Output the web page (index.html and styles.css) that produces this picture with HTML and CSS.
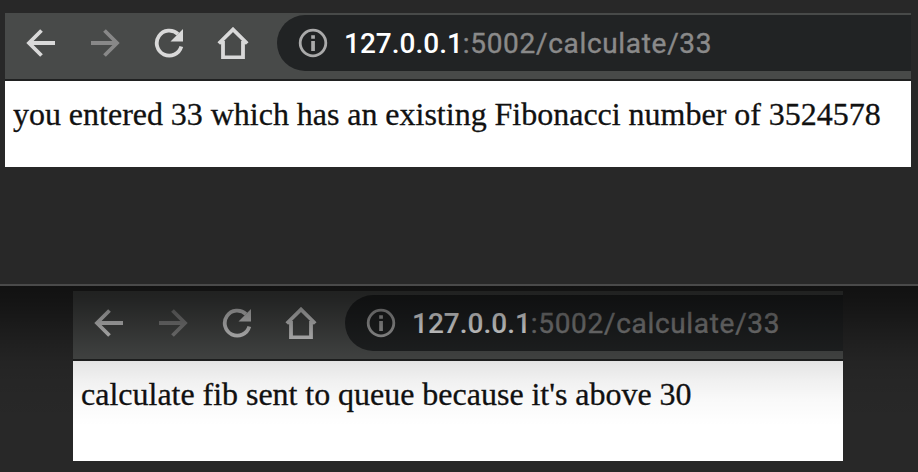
FILE: index.html
```html
<!DOCTYPE html>
<html lang="en">
<head>
<meta charset="utf-8">
<title>127.0.0.1:5002/calculate/33</title>
<link rel="stylesheet" href="styles.css">
</head>
<body>
<svg class="defs" width="0" height="0" aria-hidden="true">
  <symbol id="back" viewBox="0 0 32 32"><path d="M30 16H4M16.500 3.500 4 16l12.500 12.500"/></symbol>
  <symbol id="forward" viewBox="0 0 32 32"><path d="M2 16h26M15.500 3.500 28 16 15.500 28.500"/></symbol>
  <symbol id="reload" viewBox="0 0 32 32"><path d="M28.300 19.500A12.500 12.500 0 1 1 25 7.200"/><path class="solid" d="M30 2v12.500H17.500z"/></symbol>
  <symbol id="home" viewBox="0 0 32 32"><path d="M1.800 16.500 16 2.500l14.200 14M6 14v16.300h20V14"/></symbol>
  <symbol id="info" viewBox="0 0 32 32"><circle cx="16" cy="16" r="12.800"/><path class="solid" d="M14.200 8.200h3.700v3.600h-3.700zM14.200 14h3.700v10h-3.700z"/></symbol>
</svg>
<section class="top-panel">
  <div class="browser">
    <div class="toolbar">
      <svg class="icon"><use href="#back"/></svg>
      <svg class="icon muted"><use href="#forward"/></svg>
      <svg class="icon"><use href="#reload"/></svg>
      <svg class="icon"><use href="#home"/></svg>
      <div class="address">
        <svg class="icon info"><use href="#info"/></svg>
        <div class="url"><span class="host">127.0.0.1</span><span class="path">:5002/calculate/33</span></div>
      </div>
    </div>
    <p class="content">you entered 33 which has an existing Fibonacci number of 3524578</p>
  </div>
</section>
<section class="bottom-panel">
  <div class="browser small">
    <div class="toolbar">
      <svg class="icon"><use href="#back"/></svg>
      <svg class="icon muted"><use href="#forward"/></svg>
      <svg class="icon"><use href="#reload"/></svg>
      <svg class="icon"><use href="#home"/></svg>
      <div class="address">
        <svg class="icon info"><use href="#info"/></svg>
        <div class="url"><span class="host">127.0.0.1</span><span class="path">:5002/calculate/33</span></div>
      </div>
    </div>
    <p class="content">calculate fib sent to queue because it's above 30</p>
  </div>
</section>
</body>
</html>
```
FILE: styles.css
```css
* { box-sizing: border-box; }
body { margin: 0; height: 472px; overflow: hidden; background: #282828; }
.defs { display: none; }
.top-panel { height: 286px; padding: 13px 7px 0 5px; border-bottom: 2px solid #4a4a4a; }
.bottom-panel { position: relative; height: 186px; padding: 5px 75px 0 73px; }
/* Shadow cast by the upper panel. */
.bottom-panel::after {
  content: ""; position: absolute; inset: 0; pointer-events: none;
  background: linear-gradient(rgba(0,0,0,.57), rgba(0,0,0,.52) 12px, rgba(0,0,0,.35) 38px, rgba(0,0,0,.2) 60px, rgba(0,0,0,.1) 77px, rgba(0,0,0,.06) 94px, rgba(0,0,0,.025) 114px, transparent 140px);
}
.toolbar { display: flex; height: 68px; padding: 2px 0 8px 20px; background: #484a49; border-bottom: 2px solid #202121; }
.icon { width: 32px; height: 32px; flex: none; margin: 12px 32px 0 0; fill: none; stroke: #d9d9d9; stroke-width: 3.8; color: #d9d9d9; }
.muted { stroke: #888; }
.solid { fill: currentColor; stroke: none; }
.address { display: flex; flex: 1; min-width: 0; height: 56px; margin-left: -4px; padding-left: 20px; border-radius: 28px 0 0 28px; background: #212324; }
.info { stroke: #aaa; stroke-width: 2.8; color: #aaa; margin-right: 15px; }
.url { padding-top: 1px; font: 28px/56px Roboto, sans-serif; white-space: nowrap; }
.host { color: #fff; font-weight: 500; }
.path { color: #8a8a8a; letter-spacing: .68px; -webkit-text-stroke: .4px #8a8a8a; }
.content { margin: 0; height: 86px; padding: 15px 8px 0; background: #fff; color: #111; font: 32px/37px "Liberation Serif", serif; word-spacing: -.15px; white-space: nowrap; -webkit-text-stroke: .3px #111; font-variant-ligatures: common-ligatures; }
.small .toolbar { height: 70px; padding-top: 4px; }
.small .content { height: 100px; }
```
